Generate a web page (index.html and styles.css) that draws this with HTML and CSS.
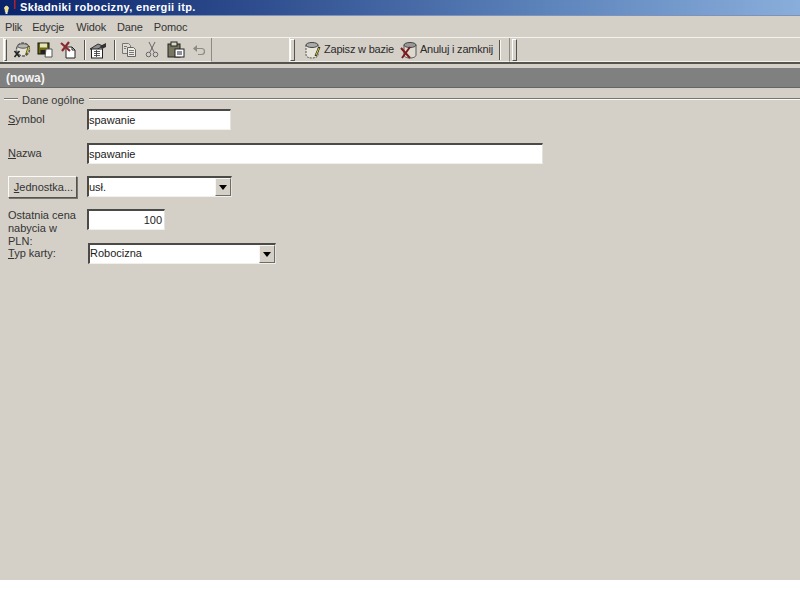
FILE: index.html
```html
<!DOCTYPE html>
<html lang="pl">
<head>
<meta charset="utf-8">
<title>Składniki robocizny, energii itp.</title>
<link rel="stylesheet" href="styles.css">
</head>
<body>
<div class="app">
  <header class="titlebar">
    <svg class="app-icon" width="16" height="16" viewBox="0 0 16 16"><path d="M4 9.500a2 2 0 1 1 3 0l-.5 2.500h-2z" fill="#f4e36a" stroke="#fff" stroke-width=".6"/><rect x="4.500" y="12" width="2" height="2" fill="#dfe3ea"/><rect x="13" y="0" width="1.500" height="9" fill="#b51c2c"/></svg>
    <span class="title-text">Składniki robocizny, energii itp.</span>
  </header>
  <nav class="menubar">
    <span class="menu-item">Plik</span>
    <span class="menu-item">Edycje</span>
    <span class="menu-item">Widok</span>
    <span class="menu-item">Dane</span>
    <span class="menu-item">Pomoc</span>
  </nav>
  <div class="toolbars">
    <div class="toolbar toolbar-a">
      <span class="grip grip-thin"></span>
      <svg class="tool tool-first" width="18" height="18" viewBox="0 0 18 18"><circle cx="10" cy="8.500" r="6.500" fill="#e6e3d9" stroke="#5a5a5a" stroke-width="1.400" stroke-dasharray="3 1"/><ellipse cx="10" cy="5" rx="5.500" ry="2.200" fill="#b9b9b4" stroke="#555"/><path d="M1.500 10l5 6M6.500 10l-5 6" stroke="#222" stroke-width="1.600"/><path d="M16 5l-3 9" stroke="#5c5520" stroke-width="2"/><path d="M16 6l-2 6" stroke="#d6cc3a"/></svg>
      <svg class="tool tool-save" width="16" height="16" viewBox="0 0 16 16"><rect x="1" y="1" width="11" height="11" fill="#6d6a12" stroke="#111"/><rect x="3" y="1.500" width="7" height="4" fill="#e6e5b8"/><rect x="3.500" y="8" width="6" height="4" fill="#222"/><path d="M9 7h6v8H8z" fill="#fff" stroke="#555"/></svg>
      <svg class="tool tool-del" width="18" height="18" viewBox="0 0 18 18"><path d="M7 6h6l3 3v8H7z" fill="#fff" stroke="#222"/><path d="M13 6v3h3" fill="none" stroke="#222"/><path d="M2 2l9 8M10 1L3 10" stroke="#8a2a30" stroke-width="2.200"/></svg>
      <span class="sep sep-a"></span>
      <svg class="tool tool-props" width="18" height="18" viewBox="0 0 18 18"><path d="M1 8l8-5 5 2-7 4z" fill="#8d8d8d" stroke="#333"/><rect x="2.500" y="8" width="11" height="9" fill="#fff" stroke="#222"/><path d="M5 10.500h6M5 12.500h6M5 14.500h6M7.500 9v7" stroke="#333" stroke-width=".8"/><path d="M11 5l6-3v4l-4 2z" fill="#333"/></svg>
      <span class="sep sep-b"></span>
      <svg class="tool tool-copy" width="16" height="16" viewBox="0 0 16 16"><path d="M1.500 1.500h6l2 2v8h-8z" fill="#dedbd2" stroke="#777"/><path d="M6.500 5.500h6l2 2v7h-8z" fill="#eeebe2" stroke="#666"/><path d="M8 8.500h5M8 10.500h5M8 12.500h5M3 4.500h3M3 6.500h2" stroke="#777"/></svg>
      <svg class="tool tool-cut" width="14" height="17" viewBox="0 0 14 17"><path d="M4 1l5 10M10 1L5 11" stroke="#666" fill="none"/><circle cx="3.500" cy="13.500" r="2.300" fill="none" stroke="#666"/><circle cx="10.500" cy="13.500" r="2.300" fill="none" stroke="#666"/></svg>
      <svg class="tool tool-paste" width="18" height="17" viewBox="0 0 18 17"><rect x="1" y="3" width="12" height="13" fill="#79765f" stroke="#222"/><rect x="4" y="1" width="6" height="4" fill="#d9d6c8" stroke="#222"/><rect x="8" y="8" width="9" height="8" fill="#fff" stroke="#222"/><path d="M10 11h5M10 13h5" stroke="#223"/></svg>
      <svg class="tool tool-undo" width="14" height="12" viewBox="0 0 14 12"><path d="M2.500 4.500h7a3 3 0 0 1 0 6H6" fill="none" stroke="#8b8b86" stroke-width="1.200"/><path d="M1 4.500l4-3.500v7z" fill="#8b8b86"/></svg>
    </div>
    <div class="toolbar toolbar-b">
      <span class="grip"></span>
      <svg class="tool tool-db" width="16" height="18" viewBox="0 0 16 18"><path d="M1 4v10c0 2 3 3 6 3s6-1 6-3V4" fill="#e8e5da" stroke="#555" stroke-dasharray="2 1"/><ellipse cx="7" cy="4" rx="6" ry="2.500" fill="#aaa" stroke="#444"/><path d="M14.500 6l-4 9" stroke="#2a2a1a" stroke-width="2"/><path d="M14 7l-3 7" stroke="#d6cc3a"/></svg>
      <span class="tool-label label-save">Zapisz w bazie</span>
      <svg class="tool tool-dbx" width="17" height="18" viewBox="0 0 17 18"><path d="M4 4v10c0 2 3 3 6 3s6-1 6-3V4" fill="#dcd9ce" stroke="#555"/><ellipse cx="10" cy="4" rx="6" ry="2.500" fill="#999" stroke="#444"/><path d="M1 7l9 10M10 6L2 17" stroke="#7c1a20" stroke-width="2"/></svg>
      <span class="tool-label label-cancel">Anuluj i zamknij</span>
      <span class="sep sep-c"></span>
    </div>
    <div class="toolbar toolbar-c">
      <span class="grip"></span>
    </div>
  </div>
  <div class="record-bar">(nowa)</div>
  <main class="form">
    <div class="group-head">
      <span class="group-line group-line-start"></span>
      <span class="group-title">Dane ogólne</span>
      <span class="group-line group-line-end"></span>
    </div>
    <div class="row row-symbol">
      <label class="field-label"><u>S</u>ymbol</label>
      <div class="input input-symbol">spawanie</div>
    </div>
    <div class="row row-name">
      <label class="field-label"><u>N</u>azwa</label>
      <div class="input input-name">spawanie</div>
    </div>
    <div class="row row-unit">
      <button class="button" type="button"><u>J</u>ednostka...</button>
      <div class="input combo combo-unit"><span>usł.</span><span class="combo-btn"><i class="arrow"></i></span></div>
    </div>
    <div class="row row-price">
      <label class="field-label label-multi">Ostatnia cena nabycia w PLN:</label>
      <div class="input input-price">100</div>
    </div>
    <div class="row row-type">
      <label class="field-label label-type"><u>T</u>yp karty:</label>
      <div class="input combo combo-type"><span>Robocizna</span><span class="combo-btn"><i class="arrow"></i></span></div>
    </div>
  </main>
</div>
</body>
</html>
```

FILE: styles.css
```css
* { box-sizing: border-box; }
html, body { margin: 0; padding: 0; background: #fff; }
body { font: 11px/13px "Liberation Sans", Arial, sans-serif; color: #2b2b2b; }
.app { width: 800px; height: 580px; background: #d4d0c8; overflow: hidden; }

.titlebar {
  height: 16px; display: flex; align-items: center; padding-left: 1px;
  background: linear-gradient(90deg, #0a246a 0%, #2c4a8c 30%, #5f86bd 70%, #8aaedb 100%);
  border-bottom: 1px solid #7d93b8;
}
.app-icon { flex: none; margin-right: 3px; }
.title-text { color: #fff; font-weight: 700; font-size: 11px; letter-spacing: .35px; }

.menubar { height: 21px; display: flex; align-items: center; padding: 1px 0 0 5px; gap: 11px; }
.menu-item { color: #333; letter-spacing: -.15px; }
.menu-item:first-child { margin-right: -1px; }
.menu-item:nth-child(2) { margin-right: 1px; }

.toolbars {
  height: 27px; display: flex;
  border-top: 1px solid #f4f2ec; border-bottom: 2px solid #55534e;
}
.toolbar { height: 100%; display: flex; align-items: center; position: relative; border-right: 1px solid #8c8a84; border-bottom: 1px solid #f2f0ea; }
.toolbar-a { width: 209px; margin-left: 3px; border-left: 1px solid #faf9f5; }
.toolbar-b { width: 221px; margin-left: 77px; border-left: 1px solid #faf9f5; }
.toolbar-c { flex: 1; padding-left: 2px; border-right: 0; }
.grip { flex: none; width: 5px; height: 22px; border: 1px solid #55534e; border-left-color: #fff; border-top-color: #fff; }
.grip-thin { width: 3px; }

.tool { flex: none; }
.tool-first { margin-left: 6px; }
.tool-save { margin-left: 6px; }
.tool-del { margin-left: 6px; }
.sep { flex: none; width: 2px; height: 20px; background: #55534e; border-right: 1px solid #f8f6f0; }
.sep-a { margin-left: 7px; }
.tool-props { margin-left: 3px; }
.sep-b { margin-left: 7px; }
.tool-copy { margin-left: 5px; }
.tool-cut { margin-left: 8px; }
.tool-paste { margin-left: 8px; }
.tool-undo { margin-left: 7px; }

.tool-db { margin-left: 10px; }
.tool-label { color: #2b2b2b; white-space: nowrap; }
.label-save { margin-left: 3px; letter-spacing: -.2px; }
.tool-dbx { margin-left: 6px; }
.label-cancel { margin-left: 3px; letter-spacing: -.22px; }
.sep-c { margin-left: 6px; }

.record-bar {
  height: 20px; margin-top: 4px; padding: 2px 0 0 6px;
  display: flex; align-items: center;
  background: #808080; border-bottom: 1px solid #666;
  color: #f4f4f4; font-weight: 700; font-size: 12px;
}

.form { padding-top: 4px; }
.group-head { height: 13px; display: flex; align-items: center; }
.group-line { height: 2px; background: #77756f; border-bottom: 1px solid #fbfaf6; }
.group-line-start { width: 14px; margin-left: 4px; }
.group-title { margin: 0 5px 0 4px; padding-top: 3px; color: #3a3a3a; }
.group-line-end { flex: 1; }

.row { display: flex; align-items: flex-start; padding-left: 8px; }
.field-label { display: block; width: 79px; flex: none; color: #333; }
.row-symbol { margin-top: 4px; height: 34px; }
.row-symbol .field-label { padding-top: 4px; }
.row-name .field-label { padding-top: 4px; }
.row-name { height: 33px; }
.row-unit { height: 33px; }
.row-price { height: 34px; }
.row-type { height: 21px; }
.label-multi { width: 72px; margin-right: 7px; height: 39px; overflow: hidden; }
.label-type { position: relative; height: 15px; margin-top: 2px; padding-top: 2px; width: 70px; margin-right: 10px; background: #d4d0c8; }

.input {
  height: 21px; padding: 3px 0 0; background: #fff; color: #1c1c1c;
  border: 2px solid #4a4a46; border-right: 1px solid #e4e2dc; border-bottom: 1px solid #f2f0ea;
  font-size: 11px;
}
.input-symbol { width: 144px; }
.input-name { width: 456px; }
.input-price { width: 78px; text-align: right; padding-right: 2px; }
.combo { display: flex; justify-content: space-between; position: relative; }
.combo-unit { width: 145px; }
.combo-type { width: 188px; padding-top: 2px; }
.combo-btn {
  position: absolute; right: 0; top: 0; bottom: 0; width: 16px; background: #d4d0c8;
  border: 1px solid #6e6c66; border-left-color: #f8f6f0; border-top-color: #f8f6f0;
  display: flex; align-items: center; justify-content: center;
}
.arrow { width: 0; height: 0; border: 4px solid transparent; border-top: 5px solid #000; border-bottom: 0; }

.button {
  width: 69px; height: 22px; padding: 0 0 0 2px; margin-right: 10px; flex: none;
  background: #d4d0c8; color: #333; font: inherit;
  border: 1px solid #55534e; border-left-color: #fbfaf6; border-top-color: #fbfaf6;
  box-shadow: 1px 1px 0 #77756f;
}
```
